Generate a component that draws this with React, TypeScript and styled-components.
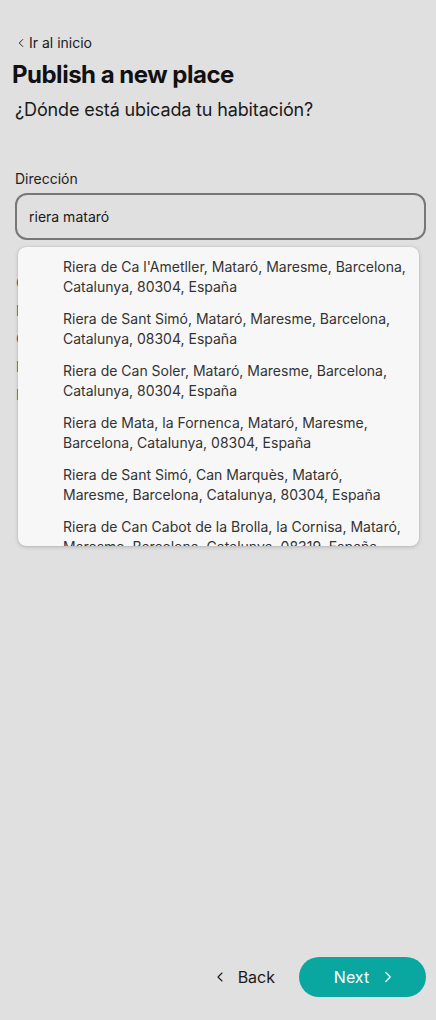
import React from "react";
import styled, { createGlobalStyle } from "styled-components";
import { ChevronLeft, ChevronRight } from "lucide-react";

const Global = createGlobalStyle`
  html, body { margin: 0; padding: 0; background: #e0e0e0; }
  body { font-family: Inter, "Noto Sans", sans-serif; color: #111; }
  * { box-sizing: border-box; }
`;

const Page = styled.div`
  min-height: 100vh;
  display: flex;
  flex-direction: column;
  padding: 33px 10px 23px 12px;
`;

const BackLink = styled.a`
  display: flex;
  align-items: center;
  gap: 1px;
  margin-left: 2px;
  font-size: 14px;
  line-height: 20px;
  color: #1a1a1a;
  text-decoration: none;
`;

const Title = styled.h1`
  margin: 6px 0 0 0;
  font-size: 24px;
  font-weight: 700;
  line-height: 32px;
  letter-spacing: -0.5px;
  color: #111;
`;

const Subtitle = styled.h2`
  margin: 6px 0 0 3px;
  font-size: 18px;
  font-weight: 400;
  line-height: 26px;
  letter-spacing: -0.15px;
  color: #1a1a1a;
`;

const Field = styled.div`
  position: relative;
  margin: 46px 0 0 3px;
  display: flex;
  flex-direction: column;
`;

const Label = styled.label`
  font-size: 14px;
  line-height: 20px;
  color: #222;
`;

const Input = styled.div`
  margin-top: 4px;
  height: 47px;
  border: 2px solid #777;
  border-radius: 12px;
  display: flex;
  align-items: center;
  padding: 0 12px;
  font-size: 14px;
  color: #1a1a1a;
`;

const HiddenRows = styled.div`
  display: flex;
  flex-direction: column;
  padding-top: 29px;
  margin-left: 1px;
`;

const HiddenRow = styled.div`
  font-size: 14px;
  line-height: 28px;
  color: #666;
`;

const Dropdown = styled.ul`
  position: absolute;
  top: 78px;
  left: 3px;
  width: 401px;
  height: 299px;
  margin: 0;
  padding: 4px 0 0 0;
  list-style: none;
  overflow: hidden;
  background: #f7f7f7;
  border-radius: 8px;
  box-shadow: 0 1px 4px rgba(0, 0, 0, 0.18), 0 0 1px rgba(0, 0, 0, 0.2);
`;

const Option = styled.li`
  padding: 6px 10px 6px 45px;
  font-size: 14px;
  line-height: 20px;
  color: #333;
`;

const Spacer = styled.div`
  flex: 1;
`;

const Footer = styled.div`
  display: flex;
  justify-content: flex-end;
  align-items: center;
  gap: 24px;
`;

const BackButton = styled.button`
  display: flex;
  align-items: center;
  gap: 10px;
  background: none;
  border: none;
  padding: 0;
  font-family: inherit;
  font-size: 16px;
  color: #1a1a1a;
`;

const NextButton = styled.button`
  display: flex;
  align-items: center;
  justify-content: center;
  gap: 10px;
  width: 127px;
  height: 40px;
  border: none;
  border-radius: 20px;
  background: #0aa7a0;
  color: #fff;
  font-family: inherit;
  font-size: 16px;
  font-weight: 400;
  padding: 0 0 0 6px;
`;

const options = [
  "Riera de Ca l'Ametller, Mataró, Maresme, Barcelona, Catalunya, 80304, España",
  "Riera de Sant Simó, Mataró, Maresme, Barcelona, Catalunya, 08304, España",
  "Riera de Can Soler, Mataró, Maresme, Barcelona, Catalunya, 80304, España",
  "Riera de Mata, la Fornenca, Mataró, Maresme, Barcelona, Catalunya, 08304, España",
  "Riera de Sant Simó, Can Marquès, Mataró, Maresme, Barcelona, Catalunya, 80304, España",
  "Riera de Can Cabot de la Brolla, la Cornisa, Mataró, Maresme, Barcelona, Catalunya, 08319, España",
];

export default function App() {
  return (
    <>
      <Global />
      <Page>
        <BackLink href="#">
          <ChevronLeft size={14} strokeWidth={1.6} />
          Ir al inicio
        </BackLink>
        <Title>Publish a new place</Title>
        <Subtitle>¿Dónde está ubicada tu habitación?</Subtitle>
        <Field>
          <Label>Dirección</Label>
          <Input>riera mataró</Input>
          <HiddenRows>
            <HiddenRow>Ciudad</HiddenRow>
            <HiddenRow>Provincia</HiddenRow>
            <HiddenRow>Código postal</HiddenRow>
            <HiddenRow>Latitud</HiddenRow>
            <HiddenRow>Longitud</HiddenRow>
          </HiddenRows>
          <Dropdown>
            {options.map((o) => (
              <Option key={o}>{o}</Option>
            ))}
          </Dropdown>
        </Field>
        <Spacer />
        <Footer>
          <BackButton>
            <ChevronLeft size={16} strokeWidth={1.6} />
            Back
          </BackButton>
          <NextButton>
            Next
            <ChevronRight size={18} strokeWidth={1.6} />
          </NextButton>
        </Footer>
      </Page>
    </>
  );
}
